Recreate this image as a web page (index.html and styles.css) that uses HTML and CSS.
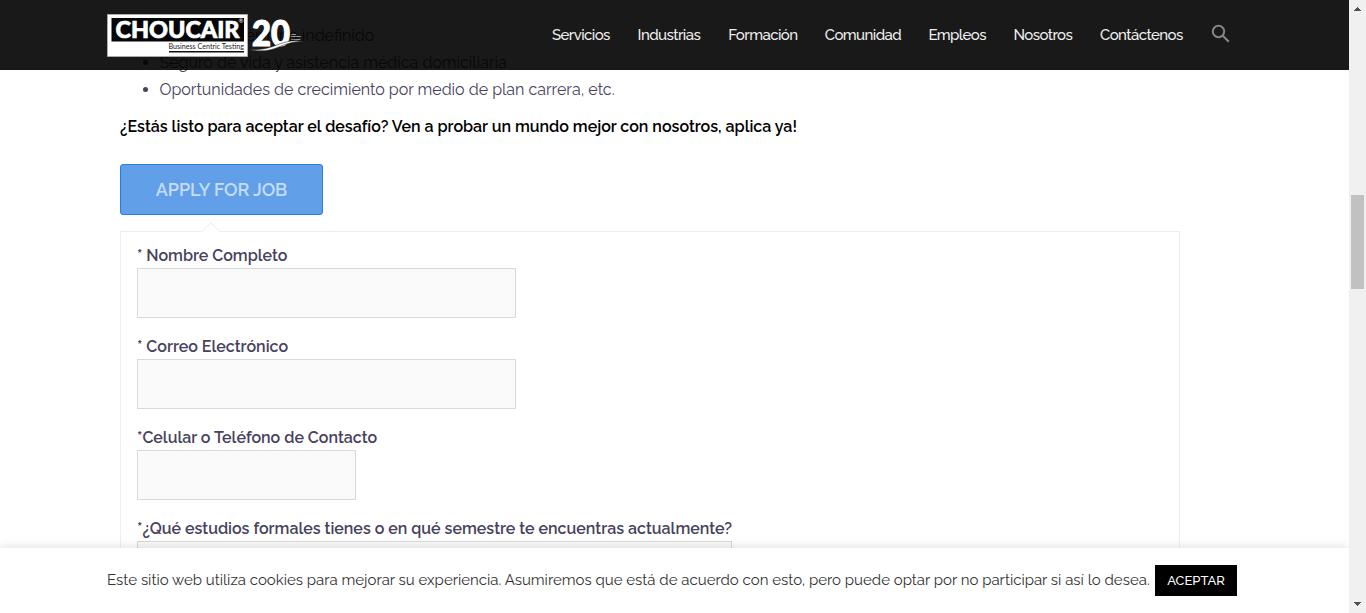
FILE: index.html
```html
<!DOCTYPE html>
<html lang="es">
<head>
<meta charset="utf-8">
<title>Choucair Testing - Empleos</title>
<link rel="stylesheet" href="styles.css">
</head>
<body>
<div class="page">
  <main class="viewport">
    <div class="content">
      <ul class="benefits">
        <li>Contrato a término indefinido</li>
        <li>Seguro de vida y asistencia médica domiciliaria</li>
        <li>Oportunidades de crecimiento por medio de plan carrera, etc.</li>
      </ul>
      <p class="callout">¿Estás listo para aceptar el desafío? Ven a probar un mundo mejor con nosotros, aplica ya!</p>
      <button class="apply">APPLY FOR JOB</button>
      <form class="panel">
        <svg class="notch" width="20" height="11" viewBox="0 0 20 11"><path d="M0 11 10 1l10 10z" fill="#fff"/><path d="M.5 10 10 1l9.500 9" fill="none" stroke="#eee"/></svg>
        <label>* Nombre Completo</label><input class="field">
        <label>* Correo Electrónico</label><input class="field">
        <label>*Celular o Teléfono de Contacto</label><input class="field short">
        <label>*¿Qué estudios formales tienes o en qué semestre te encuentras actualmente?</label><input class="field long">
      </form>
    </div>
    <header class="header">
      <svg class="logo" width="198" height="46" viewBox="106 12 198 46">
        <path d="M107.500 14.500h140v42h-140z" fill="#fff" stroke="#aaa"/>
        <path d="M111.500 18h132.500v23.500H111.500z" fill="#050608"/>
        <text class="brand" x="115.500" y="38" textLength="124" lengthAdjust="spacingAndGlyphs">CHOUCAIR</text>
        <text class="reg" x="238.500" y="23">®</text>
        <text class="tag" x="168.500" y="49" textLength="75.500" lengthAdjust="spacingAndGlyphs">Business Centric Testing</text>
        <path d="M169 51h75v1.500h-75z" fill="#111"/>
        <text class="twenty" x="252" y="45.500" textLength="38" lengthAdjust="spacingAndGlyphs">20</text>
        <path d="M250 49.500c10 .7 18-1 27-4.500 9-3.600 16-5.200 27-3.600-10-.2-17 2-25 5.500-10 4.300-20 5-29 2.600z" fill="#fff" stroke="#1a1a1a" stroke-width=".5"/>
        <text class="years" x="291" y="34.500">Años</text>
        <text class="years" x="291" y="37.300">Liderando</text>
        <text class="years" x="291" y="40.100">la Prueba</text>
      </svg>
      <nav class="nav">
        <a>Servicios</a><a>Industrias</a><a>Formación</a><a>Comunidad</a><a>Empleos</a><a>Nosotros</a><a>Contáctenos</a>
      </nav>
      <svg class="search" width="20" height="20" viewBox="0 0 20 20" fill="none" stroke="#858585" stroke-width="2"><circle cx="7.500" cy="7.500" r="5.700"/><path d="m11.800 11.800 6 6" stroke-width="2.200"/></svg>
    </header>
    <aside class="cookies">
      <span class="notice">Este sitio web utiliza cookies para mejorar su experiencia. Asumiremos que está de acuerdo con esto, pero puede optar por no participar si así lo desea.</span>
      <button class="accept">ACEPTAR</button>
    </aside>
  </main>
  <div class="scrollbar">
    <svg width="17" height="17" viewBox="0 0 17 17" shape-rendering="crispEdges"><path d="M8 7h1v1h1v1h1v1h1v1H5v-1h1V9h1V8h1z" fill="#505050"/></svg>
    <div class="thumb"></div>
    <svg class="down" width="17" height="17" viewBox="0 0 17 17" shape-rendering="crispEdges"><path d="M5 6h7v1h-1v1h-1v1H9v1H8V9H7V8H6V7H5z" fill="#505050"/></svg>
  </div>
</div>
</body>
</html>
```
FILE: styles.css
```css
* { box-sizing: border-box; }
body { margin: 0; background: #fff; color: #47425d; font: 16px/27px Raleway, Lato, sans-serif; overflow: hidden; }
button { font-family: inherit; padding: 0; }
.page { display: flex; height: 613px; overflow: hidden; }
.viewport { position: relative; width: 1349px; height: 613px; overflow: hidden; }
.content { width: 1060px; margin-left: 120px; padding-top: 22px; }
.benefits { margin: 0; padding-left: 39.500px; font-weight: 400; }
.benefits li { height: 27px; white-space: nowrap; }
.callout { margin: 10px 0 0; height: 27px; color: #000; font-weight: 600; white-space: nowrap; }
.apply { display: block; width: 203px; height: 51px; margin-top: 24px; border: 1px solid #2a7de1; border-radius: 3px; background: #619fe8; color: #c5ddf8; font-size: 18px; font-weight: 600; letter-spacing: -.12px; }
.panel { position: relative; display: flex; flex-direction: column; align-items: flex-start; height: 420px; margin-top: 16px; padding: 10px 16px; border: 1px solid #eee; }
.notch { position: absolute; left: 80px; top: -10px; }
.panel label { height: 26px; font-weight: 600; white-space: nowrap; }
.field { width: 379px; height: 50px; margin: 0 0 15px; border: 1px solid #d9d9d9; background: #fafafa; }
.short { width: 219px; }
.long { width: 595px; }
.header { position: absolute; left: 0; top: 0; display: flex; align-items: flex-start; width: 1349px; height: 70px; padding: 12px 0 0 106px; background: rgba(0,0,0,.9); }
.logo { flex: none; }
.brand { font: 900 23.500px Lato, sans-serif; fill: #fff; stroke: #fff; stroke-width: .7px; }
.reg { font: 6px Lato, sans-serif; fill: #fff; }
.tag { font: 7.500px Lato, sans-serif; fill: #222; }
.twenty { font: 900 36px Lato, sans-serif; fill: #fff; stroke: #fff; stroke-width: 1.200px; }
.years { font: 700 2.200px Lato, sans-serif; fill: #fff; }
.nav { display: grid; grid-template-columns: 58px 63px 69px 76px 57.500px 59px 83px; column-gap: 27.600px; margin: 10px 0 0 248px; color: #eee; font-size: 15px; font-weight: 500; letter-spacing: -.58px; white-space: nowrap; }
.search { margin: 12px 0 0 28px; }
.cookies { position: absolute; left: 0; top: 548px; display: flex; align-items: flex-start; width: 1349px; height: 65px; padding: 17px 0 0 107px; background: #fff; box-shadow: 0 -1px 10px rgba(0,0,0,.13); color: #333; }
.notice { width: 1048px; height: 30px; font-size: 15px; line-height: 30px; font-weight: 400; white-space: nowrap; }
.accept { width: 82px; height: 31px; border: 0; background: #000; color: #fff; font-size: 13px; font-weight: 500; }
.scrollbar { display: flex; flex-direction: column; align-items: center; width: 17px; height: 613px; background: #f0f0f0; }
.scrollbar svg { flex: none; }
.thumb { width: 13px; height: 94px; margin-top: 178px; background: #c1c1c1; }
.down { margin-top: auto; }
```
